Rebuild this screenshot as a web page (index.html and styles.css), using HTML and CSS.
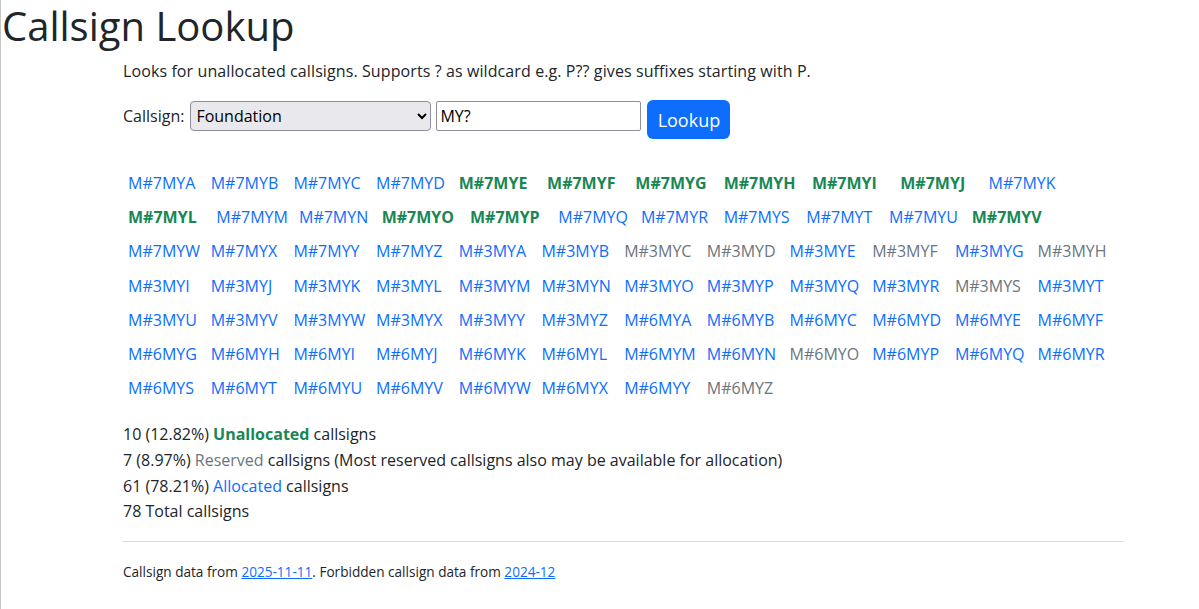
FILE: index.html
```html
<!DOCTYPE html>
<html lang="en">
<head>
    <meta charset="UTF-8">
    <meta name="viewport" content="width=device-width, initial-scale=1.0">
    <title>Callsign Lookup</title>
    <link rel="stylesheet" href="styles.css">
</head>
<body>
    <h1>Callsign Lookup</h1>
    <div class="container">
        <p class="intro">Looks for unallocated callsigns. Supports ? as wildcard e.g. P?? gives suffixes starting with P.</p>

        <form class="lookup">
            <label for="licence">Callsign:</label>
            <select id="licence">
                <option>Foundation</option>
                <option>Intermediate</option>
                <option>Full</option>
            </select>
            <input type="text" id="suffix" value="MY?">
            <button type="button">Lookup</button>
        </form>

        <div class="results">
            <a class="cs" href="#">M#7MYA</a>
            <a class="cs" href="#">M#7MYB</a>
            <a class="cs" href="#">M#7MYC</a>
            <a class="cs" href="#">M#7MYD</a>
            <span class="cs free">M#7MYE</span>
            <span class="cs free">M#7MYF</span>
            <span class="cs free">M#7MYG</span>
            <span class="cs free">M#7MYH</span>
            <span class="cs free">M#7MYI</span>
            <span class="cs free">M#7MYJ</span>
            <a class="cs" href="#">M#7MYK</a>
            <span class="cs free">M#7MYL</span>
            <a class="cs" href="#">M#7MYM</a>
            <a class="cs" href="#">M#7MYN</a>
            <span class="cs free">M#7MYO</span>
            <span class="cs free">M#7MYP</span>
            <a class="cs" href="#">M#7MYQ</a>
            <a class="cs" href="#">M#7MYR</a>
            <a class="cs" href="#">M#7MYS</a>
            <a class="cs" href="#">M#7MYT</a>
            <a class="cs" href="#">M#7MYU</a>
            <span class="cs free">M#7MYV</span>
            <a class="cs" href="#">M#7MYW</a>
            <a class="cs" href="#">M#7MYX</a>
            <a class="cs" href="#">M#7MYY</a>
            <a class="cs" href="#">M#7MYZ</a>

            <a class="cs" href="#">M#3MYA</a>
            <a class="cs" href="#">M#3MYB</a>
            <span class="cs reserved">M#3MYC</span>
            <span class="cs reserved">M#3MYD</span>
            <a class="cs" href="#">M#3MYE</a>
            <span class="cs reserved">M#3MYF</span>
            <a class="cs" href="#">M#3MYG</a>
            <span class="cs reserved">M#3MYH</span>
            <a class="cs" href="#">M#3MYI</a>
            <a class="cs" href="#">M#3MYJ</a>
            <a class="cs" href="#">M#3MYK</a>
            <a class="cs" href="#">M#3MYL</a>
            <a class="cs" href="#">M#3MYM</a>
            <a class="cs" href="#">M#3MYN</a>
            <a class="cs" href="#">M#3MYO</a>
            <a class="cs" href="#">M#3MYP</a>
            <a class="cs" href="#">M#3MYQ</a>
            <a class="cs" href="#">M#3MYR</a>
            <span class="cs reserved">M#3MYS</span>
            <a class="cs" href="#">M#3MYT</a>
            <a class="cs" href="#">M#3MYU</a>
            <a class="cs" href="#">M#3MYV</a>
            <a class="cs" href="#">M#3MYW</a>
            <a class="cs" href="#">M#3MYX</a>
            <a class="cs" href="#">M#3MYY</a>
            <a class="cs" href="#">M#3MYZ</a>

            <a class="cs" href="#">M#6MYA</a>
            <a class="cs" href="#">M#6MYB</a>
            <a class="cs" href="#">M#6MYC</a>
            <a class="cs" href="#">M#6MYD</a>
            <a class="cs" href="#">M#6MYE</a>
            <a class="cs" href="#">M#6MYF</a>
            <a class="cs" href="#">M#6MYG</a>
            <a class="cs" href="#">M#6MYH</a>
            <a class="cs" href="#">M#6MYI</a>
            <a class="cs" href="#">M#6MYJ</a>
            <a class="cs" href="#">M#6MYK</a>
            <a class="cs" href="#">M#6MYL</a>
            <a class="cs" href="#">M#6MYM</a>
            <a class="cs" href="#">M#6MYN</a>
            <span class="cs reserved">M#6MYO</span>
            <a class="cs" href="#">M#6MYP</a>
            <a class="cs" href="#">M#6MYQ</a>
            <a class="cs" href="#">M#6MYR</a>
            <a class="cs" href="#">M#6MYS</a>
            <a class="cs" href="#">M#6MYT</a>
            <a class="cs" href="#">M#6MYU</a>
            <a class="cs" href="#">M#6MYV</a>
            <a class="cs" href="#">M#6MYW</a>
            <a class="cs" href="#">M#6MYX</a>
            <a class="cs" href="#">M#6MYY</a>
            <span class="cs reserved">M#6MYZ</span>
        </div>

        <div class="stats">
            <div>10 (12.82%) <span class="free">Unallocated</span> callsigns</div>
            <div>7 (8.97%) <span class="reserved">Reserved</span> callsigns (Most reserved callsigns also may be available for allocation)</div>
            <div>61 (78.21%) <span class="allocated">Allocated</span> callsigns</div>
            <div>78 Total callsigns</div>
        </div>

        <hr>

        <p class="footer">Callsign data from <a href="#">2025-11-11</a>. Forbidden callsign data from <a href="#">2024-12</a></p>
    </div>
</body>
</html>
```

FILE: styles.css
```css
body {
    margin: 0;
    min-height: 609px;
    border-left: 1px solid #c4c4c4;
    font-family: 'Open Sans', 'Noto Sans', sans-serif;
    font-size: 16px;
    line-height: 1.5;
    color: #212529;
    background: #fff;
}
h1 {
    margin: 0;
    padding-left: 1px;
    font-size: 40px;
    font-weight: 400;
    line-height: 52px;
}
.container {
    width: 1000px;
    margin-left: 122px;
}
.intro {
    margin: 7px 0 0;
    letter-spacing: 0.1px;
}
.lookup {
    display: flex;
    align-items: flex-start;
    margin-top: 17px;
}
.lookup label {
    margin-top: 4px;
    margin-right: 6px;
}
.lookup select {
    width: 241px;
    height: 30px;
    margin-top: 1px;
    padding: 0 1px;
    border: 1px solid #8f8f9d;
    border-radius: 4px;
    background: #e9e9ed;
    font: inherit;
    color: #000;
}
.lookup input {
    width: 205px;
    height: 30px;
    margin: 1px 0 0 5px;
    padding: 0 3px;
    border: 1px solid #8f8f9d;
    border-radius: 2px;
    box-sizing: border-box;
    font: inherit;
    color: #000;
}
.lookup button {
    width: 83px;
    height: 39px;
    margin-left: 6px;
    padding: 0;
    border: none;
    border-radius: 6px;
    background: #0d6efd;
    color: #fff;
    font-family: inherit;
    font-size: 18px;
}
.results {
    display: flex;
    flex-wrap: wrap;
    margin-top: 27px;
}
.cs {
    width: 82.7px;
    padding: 5.1px 0 5.1px 5px;
    box-sizing: border-box;
    line-height: 24px;
    white-space: nowrap;
    color: #0d6efd;
    text-decoration: none;
}
.cs.free {
    width: 88.3px;
}
.free {
    font-weight: 700;
    color: #198754;
}
.reserved {
    color: #6c757d;
}
.allocated {
    color: #0d6efd;
}
.stats {
    margin-top: 17px;
    line-height: 25.6px;
}
hr {
    margin: 16px 0 0;
    border: 0;
    border-top: 1px solid #d9d9d9;
}
.footer {
    margin: 19px 0 0;
    font-size: 13.6px;
    line-height: 21px;
}
.footer a {
    color: #0d6efd;
}
```
